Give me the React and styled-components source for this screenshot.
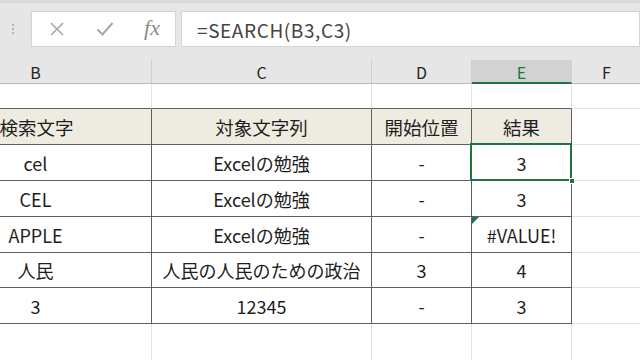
import React from "react";
import styled, { createGlobalStyle, css } from "styled-components";

const Global = createGlobalStyle`
  html, body { margin: 0; padding: 0; background: #ffffff; overflow: hidden; }
  body { width: 640px; height: 360px; font-family: "Noto Sans CJK JP", "Noto Sans", sans-serif; }
`;

const Page = styled.div`
  width: 640px;
  height: 360px;
  overflow: hidden;
  display: flex;
  flex-direction: column;
`;

const Toolbar = styled.div`
  flex-shrink: 0;
  height: 60px;
  box-sizing: border-box;
  background: #e6e6e6;
  border-top: 3px solid #d8d8d8;
  display: flex;
  align-items: flex-start;
  padding: 8px 0 0 6px;
  gap: 5px;
`;

const Grip = styled.div`
  width: 14px;
  height: 36px;
  margin-right: 6px;
  display: flex;
  flex-direction: column;
  align-items: center;
  justify-content: center;
  gap: 2px;
  span {
    width: 2px;
    height: 2px;
    background: #b4b4b4;
  }
`;

const Box = styled.div`
  height: 36px;
  box-sizing: border-box;
  background: #ffffff;
  border: 1px solid #d4d4d4;
  display: flex;
  align-items: center;
`;

const IconBox = styled(Box)`
  width: 145px;
  justify-content: space-between;
  padding: 0 15px 0 17px;
`;

const FormulaBox = styled(Box)`
  flex: 1;
  padding-left: 15px;
  font-size: 19px;
  color: #444444;
  letter-spacing: 0.6px;
`;

const Fx = styled.span`
  font-family: "Liberation Serif", serif;
  font-style: italic;
  font-size: 22px;
  color: #8a8a8a;
  margin-top: -3px;
`;

const Sheet = styled.div`
  flex-shrink: 0;
  margin-left: -80px;
  display: grid;
  grid-template-columns: 232px 220px 100px 100px 70px 100px;
  grid-template-rows: 24px 25px 36px 36px 36px 36px 35px 36px 40px;
`;

const ColHead = styled.div`
  box-sizing: border-box;
  background: ${(p) => (p.$active ? "#d2d2d2" : "#e6e6e6")};
  border-right: 1px solid #cfcfcf;
  border-bottom: ${(p) => (p.$active ? "2px solid #217346" : "1px solid #b9b9b9")};
  color: ${(p) => (p.$active ? "#217346" : "#222")};
  font-size: 16px;
  display: flex;
  align-items: center;
  justify-content: center;
  padding-top: ${(p) => (p.$active ? "1px" : "0")};
`;

const Cell = styled.div`
  position: relative;
  box-sizing: border-box;
  border-right: 1px solid ${(p) => (p.$dark || p.$darkRight ? "#5e5e5e" : "#e2e2e2")};
  border-bottom: 1px solid ${(p) => (p.$dark || p.$darkBottom ? "#5e5e5e" : "#e2e2e2")};
  background: ${(p) => (p.$head ? "#eeece1" : "#ffffff")};
  color: #1e1e1e;
  font-size: ${(p) => (p.$head ? "18.5px" : "18px")};
  display: flex;
  align-items: center;
  justify-content: center;
  white-space: nowrap;
  ${(p) =>
    p.$selected &&
    css`
      &::before {
        content: "";
        position: absolute;
        left: -2px;
        top: -2px;
        right: -1px;
        bottom: -1px;
        border: 2px solid #217346;
        z-index: 2;
      }
      &::after {
        content: "";
        position: absolute;
        right: -4px;
        bottom: -4px;
        width: 6px;
        height: 6px;
        background: #217346;
        border: 1px solid #ffffff;
        box-sizing: border-box;
        z-index: 3;
      }
    `}
  ${(p) =>
    p.$error &&
    css`
      &::after {
        content: "";
        position: absolute;
        left: 0;
        top: 0;
        width: 0;
        height: 0;
        border-top: 7px solid #217346;
        border-right: 7px solid transparent;
      }
    `}
`;

const HeadText = styled.span`
  padding-left: ${(p) => (p.$nudge ? "2px" : "0")};
`;

const XIcon = () => (
  <svg width="16" height="16" viewBox="0 0 16 16">
    <path d="M2 2 L14 14 M14 2 L2 14" stroke="#a8a8a8" strokeWidth="1.6" fill="none" />
  </svg>
);

const CheckIcon = () => (
  <svg width="18" height="16" viewBox="0 0 18 16">
    <path d="M1.5 8.5 L6.5 13.5 L16.5 2" stroke="#a8a8a8" strokeWidth="2" fill="none" />
  </svg>
);

const rows = [
  ["cel", "Excelの勉強", "-", "3"],
  ["CEL", "Excelの勉強", "-", "3"],
  ["APPLE", "Excelの勉強", "-", "#VALUE!"],
  ["人民", "人民の人民のための政治", "3", "4"],
  ["3", "12345", "-", "3"],
];

export default function App() {
  const cols = ["B", "C", "D", "E", "F", ""];
  return (
    <Page>
      <Global />
      <Toolbar>
        <Grip>
          <span />
          <span />
          <span />
        </Grip>
        <IconBox>
          <XIcon />
          <CheckIcon />
          <Fx>fx</Fx>
        </IconBox>
        <FormulaBox>=SEARCH(B3,C3)</FormulaBox>
      </Toolbar>
      <Sheet>
        {cols.map((c, i) => (
          <ColHead key={"h" + i} $active={c === "E"}>
            {c}
          </ColHead>
        ))}
        {cols.map((c, i) => (
          <Cell key={"r1" + i} $darkBottom={i < 4} />
        ))}
        {["検索文字", "対象文字列", "開始位置", "結果"].map((t, i) => (
          <Cell key={t} $head $dark>
            <HeadText $nudge={i === 0}>{t}</HeadText>
          </Cell>
        ))}
        <Cell />
        <Cell />
        {rows.map((r, ri) => (
          <React.Fragment key={ri}>
            {r.map((v, ci) => (
              <Cell
                key={ci}
                $dark
                $selected={ri === 0 && ci === 3}
                $error={ri === 2 && ci === 3}
              >
                {v}
              </Cell>
            ))}
            <Cell />
            <Cell />
          </React.Fragment>
        ))}
        {cols.map((c, i) => (
          <Cell key={"e" + i} />
        ))}
      </Sheet>
    </Page>
  );
}
